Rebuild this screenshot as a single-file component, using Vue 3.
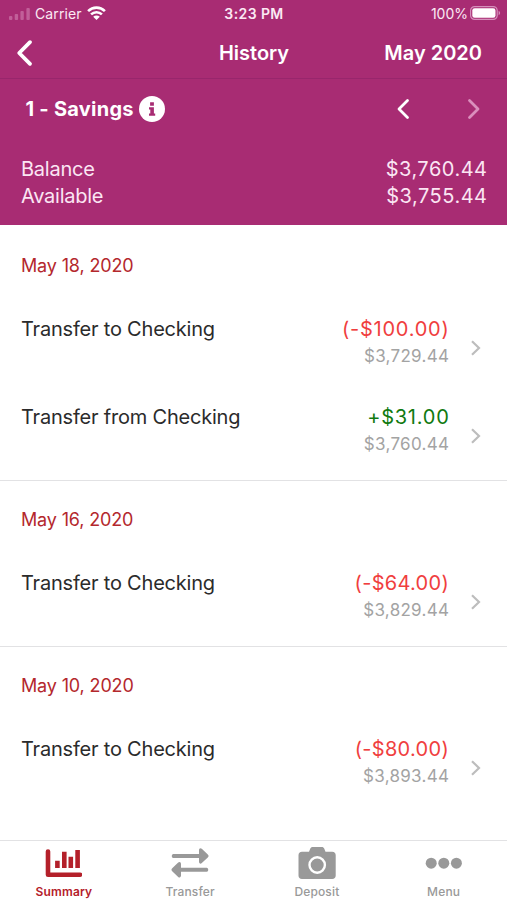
<script setup>
const groups = [
  {
    date: 'May 18, 2020',
    items: [
      { label: 'Transfer to Checking', amount: '(-$100.00)', balance: '$3,729.44', kind: 'debit' },
      { label: 'Transfer from Checking', amount: '+$31.00', balance: '$3,760.44', kind: 'credit' },
    ],
  },
  {
    date: 'May 16, 2020',
    items: [{ label: 'Transfer to Checking', amount: '(-$64.00)', balance: '$3,829.44', kind: 'debit' }],
  },
  {
    date: 'May 10, 2020',
    items: [{ label: 'Transfer to Checking', amount: '(-$80.00)', balance: '$3,893.44', kind: 'debit' }],
  },
]

const hasNarrowDigit = (amount) => amount.includes('1')
</script>

<template>
  <div class="screen">
    <header class="top">
      <div class="status">
        <div class="status-left">
          <svg class="signal" width="22" height="14" viewBox="0 0 22 14">
            <rect x="0" y="9" width="3.4" height="4" rx="1" />
            <rect x="5.7" y="7" width="3.4" height="6" rx="1" />
            <rect x="11.4" y="4" width="3.4" height="9" rx="1" />
            <rect x="17.4" y="1" width="3.4" height="12" rx="1" />
          </svg>
          <span class="carrier">Carrier</span>
          <svg class="wifi" width="19" height="14" viewBox="0 0 19 14">
            <path d="M1.1 5.1a12 12 0 0 1 16.8 0" />
            <path d="M4.1 8.4a7.7 7.7 0 0 1 10.8 0" />
            <path class="wifi-dot" d="M9.5 14 6.2 10.8a4.7 4.7 0 0 1 6.6 0z" />
          </svg>
        </div>
        <span class="time">3:23 PM</span>
        <div class="status-right">
          <span class="percent">100%</span>
          <svg class="battery" width="31" height="14" viewBox="0 0 31 14">
            <rect class="battery-shell" x="0.6" y="0.6" width="26.6" height="12.8" rx="4" />
            <rect x="2.3" y="2.3" width="23.2" height="9.4" rx="2.3" fill="#fff" />
            <path class="battery-tip" d="M28.6 4.8c2 .8 2 3.6 0 4.4z" />
          </svg>
        </div>
      </div>
      <nav class="navbar">
        <svg class="back" width="18" height="28" viewBox="0 0 18 28">
          <path d="M14 3.2 3.2 14 14 24.8" />
        </svg>
        <h1 class="title">History</h1>
        <span class="month">May 2020</span>
      </nav>
      <div class="account">
        <span class="account-name">1 - Savings</span>
        <svg class="info" width="26" height="26" viewBox="0 0 26 26">
          <circle cx="13" cy="13" r="13" fill="#fff" />
          <path fill="#a82c73" d="M11.1 6.2h3.8v3.5h-3.8zM10 11.2h4.9v6.2h1.3v2.4H10v-2.4h1.3v-3.8H10z" />
        </svg>
        <svg class="arrow prev" width="14" height="22" viewBox="0 0 14 22">
          <path d="M11.5 2.5 3 11l8.500 8.500" />
        </svg>
        <svg class="arrow next" width="14" height="22" viewBox="0 0 14 22">
          <path d="M2.5 2.5 11 11l-8.500 8.500" />
        </svg>
      </div>
      <dl class="balances">
        <div class="balance"><dt>Balance</dt><dd>$3,760.44</dd></div>
        <div class="balance"><dt>Available</dt><dd>$3,755.44</dd></div>
      </dl>
    </header>

    <main class="list">
      <section v-for="g in groups" :key="g.date" class="group">
        <h2 class="date">{{ g.date }}</h2>
        <div v-for="t in g.items" :key="t.balance" class="row">
          <span class="label">{{ t.label }}</span>
          <div class="figures">
            <span class="amount" :class="[t.kind, { wide: hasNarrowDigit(t.amount) }]">{{ t.amount }}</span>
            <span class="running">{{ t.balance }}</span>
          </div>
          <svg class="chevron" width="12" height="18" viewBox="0 0 12 18">
            <path d="M2 2.2 9 9l-7 6.8" />
          </svg>
        </div>
      </section>
    </main>

    <footer class="tabs">
      <div class="tab active">
        <svg width="38" height="34" viewBox="0 0 38 34">
          <path class="axis" d="M4 4.6v23.1H36" />
          <path class="bars" d="M13.4 13.7V21M20.3 4.7V21M26.8 9.7V21M33.6 3V21" />
        </svg>
        <span class="tab-name summary">Summary</span>
      </div>
      <div class="tab">
        <svg width="38" height="34" viewBox="0 0 38 34">
          <path d="M2.3 7H28V3.2c0-2 1.5-2.6 2.8-1.4l6 5.7c1 .9 1 2 0 2.9l-6 5.7C29.5 17.2 28 16.6 28 14.8V11H2.3C.3 11 .3 7 2.3 7z" />
          <path d="M35.7 20.8H10V17c0-2-1.5-2.6-2.8-1.4l-6 5.7c-1 .9-1 2 0 2.9l6 5.7C8.5 31 10 30.4 10 28.6v-3.8h25.7c2 0 2-4 0-4z" />
        </svg>
        <span class="tab-name">Transfer</span>
      </div>
      <div class="tab">
        <svg width="38" height="34" viewBox="0 0 38 34">
          <path d="M4 4.8h7l1.2-3C12.7.6 13.5 0 14.8 0h8.9c1.3 0 2.1.6 2.6 1.8l1.2 3H34.2c2.2 0 3.500 1.300 3.500 3.500v20.200c0 2.200-1.300 3.500-3.500 3.500H4c-2.200 0-3.500-1.300-3.500-3.500V8.300C.5 6.100 1.800 4.800 4 4.800z" />
          <circle class="lens" cx="19.2" cy="18" r="7.7" />
        </svg>
        <span class="tab-name">Deposit</span>
      </div>
      <div class="tab">
        <svg width="38" height="34" viewBox="0 0 38 34">
          <circle cx="6.2" cy="16.2" r="5.5" />
          <circle cx="18.8" cy="16.2" r="5.5" />
          <circle cx="31.4" cy="16.2" r="5.5" />
        </svg>
        <span class="tab-name">Menu</span>
      </div>
    </footer>
  </div>
</template>

<style>
body {
  margin: 0;
  background: #fff;
}
</style>

<style scoped>
.screen {
  display: flex;
  flex-direction: column;
  width: 507px;
  height: 900px;
  overflow: hidden;
  background: #fff;
  font-family: Inter, "Liberation Sans", sans-serif;
  color: #2b2b2b;
}
svg {
  display: block;
  flex: none;
}
h1, h2, dl, dt, dd {
  margin: 0;
  font-weight: 400;
}
.top {
  height: 225px;
  background: #a82c73;
  color: #fff;
  flex: none;
}
.status {
  display: grid;
  grid-template-columns: 1fr auto 1fr;
  align-items: center;
  height: 28px;
  padding: 0 6px 0 9px;
  font-size: 14px;
  line-height: 28px;
}
.status-left, .status-right {
  display: flex;
  align-items: center;
}
.status-right {
  justify-content: flex-end;
  gap: 2px;
}
.signal {
  fill: #c15f99;
  margin-top: -1px;
}
.carrier {
  margin: 0 5px 0 4px;
  color: #fbe9f4;
  letter-spacing: 0.1px;
}
.wifi {
  fill: none;
  stroke: #fff;
  stroke-width: 2.6;
  margin-top: -2px;
}
.wifi-dot {
  fill: #fff;
  stroke: none;
}
.time {
  font-weight: 600;
  color: #fbe9f4;
  letter-spacing: 0.4px;
  padding-right: 2px;
}
.percent {
  color: #fbe9f4;
}
.battery {
  margin-top: -2px;
}
.battery-shell {
  fill: none;
  stroke: #d58fbb;
  stroke-width: 1.2;
}
.battery-tip {
  fill: #d58fbb;
}
.navbar {
  display: grid;
  grid-template-columns: 1fr auto 1fr;
  align-items: center;
  height: 50px;
  padding: 0 25px 0 16px;
  border-bottom: 1px solid #98266c;
}
.back {
  fill: none;
  stroke: #fff;
  stroke-width: 3.8;
  stroke-linecap: round;
  stroke-linejoin: round;
}
.title {
  font-size: 20px;
  font-weight: 600;
  padding-left: 10px;
}
.month {
  font-size: 20px;
  font-weight: 600;
  text-align: right;
}
.account {
  display: flex;
  align-items: center;
  height: 59px;
  padding: 0 26px 0 25.5px;
}
.account-name {
  font-size: 20px;
  font-weight: 700;
  letter-spacing: 0.25px;
}
.info {
  margin-left: 5.5px;
}
.arrow {
  fill: none;
  stroke: #fff;
  stroke-width: 2.8;
  stroke-linecap: round;
  stroke-linejoin: round;
}
.prev {
  margin-left: auto;
}
.next {
  margin-left: 57px;
  stroke: #db8fbd;
}
.balances {
  padding: 17.500px 20px 0 21px;
}
.balance {
  display: flex;
  justify-content: space-between;
  font-size: 20px;
  line-height: 27.5px;
  color: #fbe6f3;
}
.balance dt {
  letter-spacing: -0.25px;
}
.balance dd {
  letter-spacing: 0.5px;
  margin-right: -0.5px;
}
.list {
  flex: 1;
  padding-top: 2px;
}
.group {
  padding: 26px 21px 6px;
  border-bottom: 1px solid #e2e2e4;
}
.group:last-child {
  border-bottom: 0;
}
.date {
  font-size: 18px;
  line-height: 26px;
  padding-bottom: 19px;
  color: #b4282d;
  letter-spacing: -0.15px;
}
.row {
  display: flex;
  height: 70px;
  padding-top: 18px;
  font-size: 20px;
  line-height: 26px;
}
.label {
  letter-spacing: -0.2px;
}
.figures {
  display: flex;
  flex-direction: column;
  align-items: flex-end;
  margin-left: auto;
}
.amount {
  letter-spacing: 0.3px;
}
.amount.wide {
  letter-spacing: 0.75px;
  margin-right: -0.5px;
}
.debit {
  color: #f03e3e;
}
.credit {
  color: #107a10;
}
.running {
  font-size: 17px;
  line-height: 28px;
  color: #a3a3a3;
  letter-spacing: 0.3px;
  margin-right: -0.3px;
}
.chevron {
  margin: 23px 4px 0 21px;
  fill: none;
  stroke: #bdbdbd;
  stroke-width: 2.2;
}
.tabs {
  display: grid;
  grid-template-columns: repeat(4, 1fr);
  height: 60px;
  box-sizing: border-box;
  border-top: 1px solid #e2e2e4;
  background: #fff;
}
.tab {
  display: flex;
  flex-direction: column;
  align-items: center;
  padding-top: 6px;
  color: #999;
  fill: #999;
}
.tab.active {
  color: #b4202a;
}
.axis, .bars {
  fill: none;
  stroke: #b4202a;
  stroke-width: 4.6;
  stroke-linecap: round;
  stroke-linejoin: round;
}
.bars {
  stroke-linecap: butt;
}
.lens {
  fill: none;
  stroke: #fff;
  stroke-width: 2.4;
}
.tab-name {
  font-size: 12px;
  line-height: 17px;
  margin-top: 2px;
  font-weight: 500;
  letter-spacing: 0.15px;
}
.summary {
  font-weight: 600;
  padding-left: 1px;
}
</style>
